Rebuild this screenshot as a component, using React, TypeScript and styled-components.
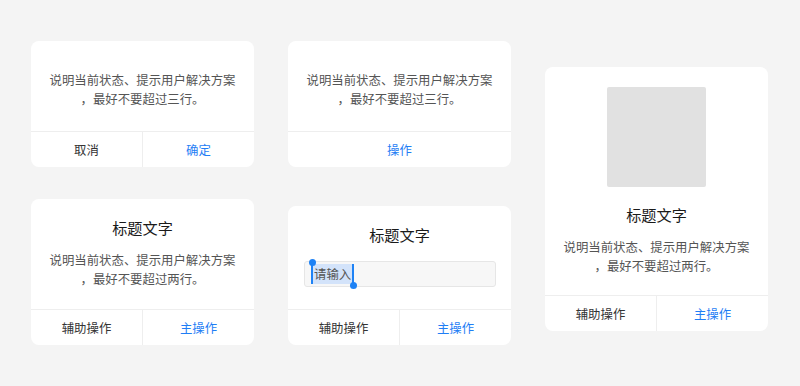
import React from "react";
import styled, { createGlobalStyle } from "styled-components";

const Global = createGlobalStyle`
  html, body {
    margin: 0;
    padding: 0;
    background: #f4f4f4;
    font-family: "Noto Sans CJK SC", "Noto Sans", sans-serif;
  }
  * { box-sizing: border-box; }
`;

const Page = styled.div`
  width: 800px;
  height: 386px;
  padding: 41px 31px 0;
  display: flex;
  align-items: flex-start;
  gap: 34px;
`;

const Column = styled.div<{ $offset?: number; $gap?: number }>`
  width: 223px;
  display: flex;
  flex-direction: column;
  gap: ${(p) => p.$gap ?? 32}px;
  margin-top: ${(p) => p.$offset ?? 0}px;
`;

const Card = styled.div`
  width: 223px;
  background: #ffffff;
  border-radius: 8px;
  overflow: hidden;
  display: flex;
  flex-direction: column;
`;

const Body = styled.div<{ $top: number; $bottom: number; $gap?: number }>`
  padding: ${(p) => p.$top}px 14px ${(p) => p.$bottom}px;
  display: flex;
  flex-direction: column;
  align-items: center;
  gap: ${(p) => p.$gap ?? 13}px;
`;

const Title = styled.div`
  font-size: 15.2px;
  line-height: 22px;
  color: #1a1a1a;
  text-align: center;
`;

const Text = styled.div<{ $lift?: number }>`
  font-size: 12.4px;
  line-height: 19px;
  color: #555555;
  text-align: center;
  line-break: anywhere;
  width: 100%;
  margin-top: ${(p) => -(p.$lift ?? 0)}px;
`;

const Picture = styled.div`
  width: 99px;
  height: 100px;
  background: #e1e1e1;
  border-radius: 2px;
`;

const Field = styled.div`
  width: 192px;
  height: 26px;
  align-self: flex-start;
  margin-left: 2px;
  background: #f7f7f7;
  border: 1px solid #e6e6e6;
  border-radius: 3px;
  display: flex;
  align-items: center;
  padding-left: 6px;
`;

const Selection = styled.span`
  position: relative;
  display: inline-block;
  font-size: 12.4px;
  line-height: 20px;
  height: 20px;
  padding: 0 1px;
  color: #555555;
  background: #d3e3fa;
  border-left: 2px solid #1e82f5;
  border-right: 2px solid #1e82f5;

  &::before,
  &::after {
    content: "";
    position: absolute;
    width: 7px;
    height: 7px;
    border-radius: 50%;
    background: #1e82f5;
  }
  &::before {
    left: -4.5px;
    top: -5px;
  }
  &::after {
    right: -4.5px;
    bottom: -5px;
  }
`;

const Actions = styled.div`
  height: 36px;
  border-top: 1px solid #eeeeee;
  display: flex;
`;

const Action = styled.div<{ $primary?: boolean }>`
  flex: 1;
  display: flex;
  align-items: center;
  justify-content: center;
  font-size: 12.4px;
  color: ${(p) => (p.$primary ? "#1f7ef5" : "#333333")};
  & + & {
    border-left: 1px solid #eeeeee;
  }
`;

const three = "说明当前状态、提示用户解决方案，最好不要超过三行。";
const two = "说明当前状态、提示用户解决方案，最好不要超过两行。";

export default function App() {
  return (
    <>
      <Global />
      <Page>
        <Column $gap={32}>
          <Card>
            <Body $top={30} $bottom={22}>
              <Text>{three}</Text>
            </Body>
            <Actions>
              <Action>取消</Action>
              <Action $primary>确定</Action>
            </Actions>
          </Card>
          <Card>
            <Body $top={17} $bottom={20} $gap={13}>
              <Title>标题文字</Title>
              <Text>{two}</Text>
            </Body>
            <Actions>
              <Action>辅助操作</Action>
              <Action $primary>主操作</Action>
            </Actions>
          </Card>
        </Column>
        <Column $gap={39}>
          <Card>
            <Body $top={30} $bottom={22}>
              <Text>{three}</Text>
            </Body>
            <Actions>
              <Action $primary>操作</Action>
            </Actions>
          </Card>
          <Card>
            <Body $top={17} $bottom={22} $gap={16}>
              <Title>标题文字</Title>
              <Field>
                <Selection>请输入</Selection>
              </Field>
            </Body>
            <Actions>
              <Action>辅助操作</Action>
              <Action $primary>主操作</Action>
            </Actions>
          </Card>
        </Column>
        <Column $offset={26}>
          <Card>
            <Body $top={20} $bottom={19} $gap={16}>
              <Picture />
              <Title>标题文字</Title>
              <Text $lift={3}>{two}</Text>
            </Body>
            <Actions>
              <Action>辅助操作</Action>
              <Action $primary>主操作</Action>
            </Actions>
          </Card>
        </Column>
      </Page>
    </>
  );
}
